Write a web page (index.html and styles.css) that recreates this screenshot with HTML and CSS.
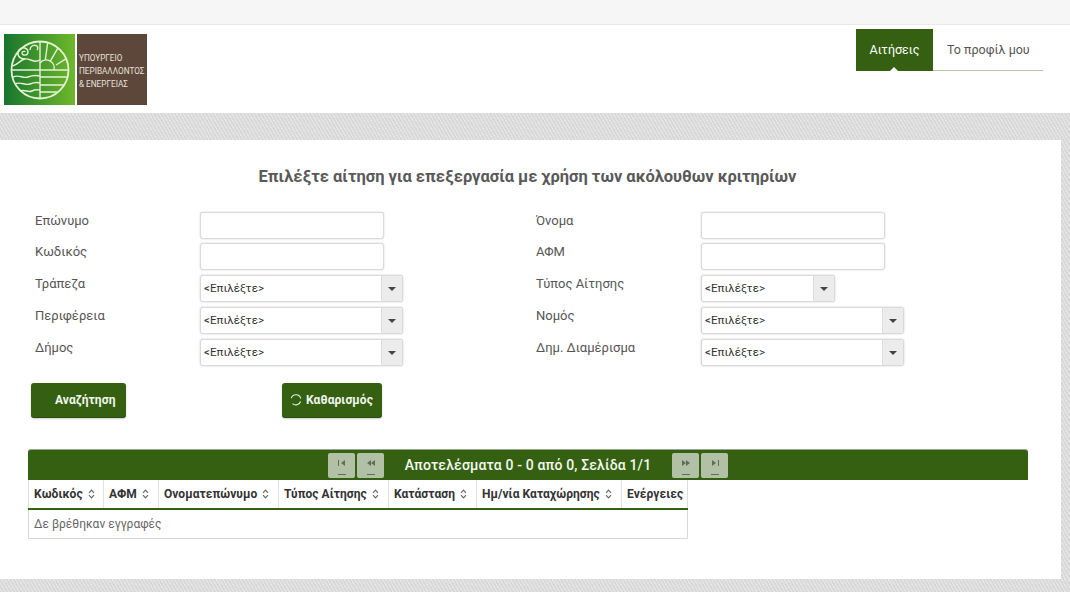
FILE: index.html
```html
<!DOCTYPE html>
<html lang="el">
<head>
<meta charset="utf-8">
<title>Αιτήσεις</title>
<link rel="stylesheet" href="styles.css">
</head>
<body>
<div class="topbar"></div>
<header class="header">
  <div class="logo">
    <div class="logo-mark">
      <svg width="60" height="60" viewBox="0 0 60 60" fill="none" stroke="#e4f3d2" stroke-width="1.4">
        <circle cx="30" cy="30" r="28.5" stroke-width="1.8"/>
        <path d="M30 1.5V58.5"/>
        <path d="M1.5 30H58.5M30 37H57M30 45H54M30 52H47"/>
        <path d="M3 37c6-3 10 2 15 0s8-2 12-1M5 44c6-3 10 2 15 0s7-2 10-1M10 51c5-2 8 2 12 0s5-1 8-1"/>
        <path d="M30 23a8 8 0 0 1 14 7M35.3 20L37.7 2.5M40 21.7L47.7 8.3M46 25L56.7 18.3"/>
        <path d="M2.5 26c5-1 8-6 12-7 6-1 10 5 15 1"/>
        <path d="M15 19c-6 0-9-5-6-9 3-4 9-2 9 2 0 4-6 4-6 1 0-2 3-2 3-1"/>
        <path d="M20 10c0-4 4-6 7-4 1 1 1 3 0 4"/>
      </svg>
    </div>
    <div class="logo-text">ΥΠΟΥΡΓΕΙΟ<br>ΠΕΡΙΒΑΛΛΟΝΤΟΣ<br>&amp; ΕΝΕΡΓΕΙΑΣ</div>
  </div>
  <nav class="tabs">
    <a class="tab tab-active">Αιτήσεις</a>
    <a class="tab tab-plain">Το προφίλ μου</a>
  </nav>
</header>
<div class="band-wrap">
  <main class="panel">
    <h1 class="title">Επιλέξτε αίτηση για επεξεργασία με χρήση των ακόλουθων κριτηρίων</h1>
    <form class="form">
      <label class="lbl">Επώνυμο</label>
      <div class="field"><input class="txt" type="text"></div>
      <label class="lbl">Όνομα</label>
      <div class="field"><input class="txt" type="text"></div>

      <label class="lbl">Κωδικός</label>
      <div class="field"><input class="txt" type="text"></div>
      <label class="lbl">ΑΦΜ</label>
      <div class="field"><input class="txt" type="text"></div>

      <label class="lbl">Τράπεζα</label>
      <div class="field"><div class="sel"><span class="sel-val">&lt;Επιλέξτε&gt;</span><span class="sel-btn"><i class="caret"></i></span></div></div>
      <label class="lbl">Τύπος Αίτησης</label>
      <div class="field"><div class="sel sel-short"><span class="sel-val">&lt;Επιλέξτε&gt;</span><span class="sel-btn"><i class="caret"></i></span></div></div>

      <label class="lbl">Περιφέρεια</label>
      <div class="field"><div class="sel"><span class="sel-val">&lt;Επιλέξτε&gt;</span><span class="sel-btn"><i class="caret"></i></span></div></div>
      <label class="lbl">Νομός</label>
      <div class="field"><div class="sel"><span class="sel-val">&lt;Επιλέξτε&gt;</span><span class="sel-btn"><i class="caret"></i></span></div></div>

      <label class="lbl">Δήμος</label>
      <div class="field"><div class="sel"><span class="sel-val">&lt;Επιλέξτε&gt;</span><span class="sel-btn"><i class="caret"></i></span></div></div>
      <label class="lbl">Δημ. Διαμέρισμα</label>
      <div class="field"><div class="sel"><span class="sel-val">&lt;Επιλέξτε&gt;</span><span class="sel-btn"><i class="caret"></i></span></div></div>
    </form>
    <div class="actions">
      <button class="btn btn-search" type="button">Αναζήτηση</button>
      <button class="btn btn-clear" type="button">
        <svg width="12" height="12" viewBox="0 0 12 12" fill="none" stroke="#e8efe0" stroke-width="1.1"><path d="M1.2 4.2A5 5 0 0 1 10.8 4.5M10.6 7.5A5 5 0 0 1 2.5 9.6"/></svg>
        Καθαρισμός
      </button>
    </div>
    <section class="results">
      <div class="pager">
        <span class="pg-group">
          <span class="pg-btn"><svg width="10" height="6" viewBox="0 0 10 6" fill="#5f6f55"><path d="M1 0h1v6H1zM8 0v6L4 3z"/></svg><i class="pg-line"></i></span>
          <span class="pg-btn"><svg width="10" height="6" viewBox="0 0 10 6" fill="#5f6f55"><path d="M5 0v6L1 3zM9 0v6L5 3z"/></svg><i class="pg-line"></i></span>
        </span>
        <span class="pg-text">Αποτελέσματα 0 - 0 από 0, Σελίδα 1/1</span>
        <span class="pg-group">
          <span class="pg-btn"><svg width="10" height="6" viewBox="0 0 10 6" fill="#5f6f55"><path d="M1 0v6l4-3zM5 0v6l4-3z"/></svg><i class="pg-line"></i></span>
          <span class="pg-btn"><svg width="10" height="6" viewBox="0 0 10 6" fill="#5f6f55"><path d="M2 0v6l4-3zM8 0h1v6H8z"/></svg><i class="pg-line"></i></span>
        </span>
      </div>
      <table class="grid">
        <colgroup>
          <col class="c1"><col class="c2"><col class="c3"><col class="c4"><col class="c5"><col class="c6"><col class="c7">
        </colgroup>
        <thead>
          <tr>
            <th>Κωδικός <svg class="sort" width="7" height="10" viewBox="0 0 7 10" fill="none" stroke="#666" stroke-width="1.2"><path d="M1 3.8L3.5 1.2 6 3.8M1 6.2L3.5 8.8 6 6.2"/></svg></th>
            <th>ΑΦΜ <svg class="sort" width="7" height="10" viewBox="0 0 7 10" fill="none" stroke="#666" stroke-width="1.2"><path d="M1 3.8L3.5 1.2 6 3.8M1 6.2L3.5 8.8 6 6.2"/></svg></th>
            <th>Ονοματεπώνυμο <svg class="sort" width="7" height="10" viewBox="0 0 7 10" fill="none" stroke="#666" stroke-width="1.2"><path d="M1 3.8L3.5 1.2 6 3.8M1 6.2L3.5 8.8 6 6.2"/></svg></th>
            <th>Τύπος Αίτησης <svg class="sort" width="7" height="10" viewBox="0 0 7 10" fill="none" stroke="#666" stroke-width="1.2"><path d="M1 3.8L3.5 1.2 6 3.8M1 6.2L3.5 8.8 6 6.2"/></svg></th>
            <th>Κατάσταση <svg class="sort" width="7" height="10" viewBox="0 0 7 10" fill="none" stroke="#666" stroke-width="1.2"><path d="M1 3.8L3.5 1.2 6 3.8M1 6.2L3.5 8.8 6 6.2"/></svg></th>
            <th>Ημ/νία Καταχώρησης <svg class="sort" width="7" height="10" viewBox="0 0 7 10" fill="none" stroke="#666" stroke-width="1.2"><path d="M1 3.8L3.5 1.2 6 3.8M1 6.2L3.5 8.8 6 6.2"/></svg></th>
            <th>Ενέργειες</th>
          </tr>
        </thead>
        <tbody>
          <tr><td colspan="7">Δε βρέθηκαν εγγραφές</td></tr>
        </tbody>
      </table>
    </section>
  </main>
  <div class="band-right"></div>
</div>
<div class="band-bottom"></div>
</body>
</html>
```

FILE: styles.css
```css
* { box-sizing: border-box; }
html, body { margin: 0; padding: 0; }
body {
  width: 1070px;
  height: 592px;
  overflow: hidden;
  background: #fff;
  font-family: Roboto, "Liberation Sans", sans-serif;
  color: #555;
}
.topbar {
  height: 25px;
  background: #f6f6f6;
  border-bottom: 1px solid #e9e9e9;
  box-shadow: 0 1px 3px rgba(0,0,0,.08);
}
.header {
  height: 88px;
  background: #fff;
  padding: 9px 27px 0 4px;
  display: flex;
  justify-content: space-between;
  align-items: flex-start;
}
.logo {
  display: flex;
  width: 143px;
  height: 71px;
}
.logo-mark {
  width: 71px;
  height: 71px;
  background: linear-gradient(90deg, #17752e, #6fb82b);
  display: flex;
  align-items: center;
  justify-content: center;
}
.logo-text {
  margin-left: 2px;
  width: 70px;
  background: #5c473a;
  color: #e8e0da;
  font-size: 8.2px;
  line-height: 13px;
  padding: 18px 0 0 2px;
  white-space: nowrap;
  overflow: hidden;
}
.tabs {
  display: flex;
  width: 187px;
  margin-top: -5px;
  height: 42px;
  border-bottom: 1px solid #b8c5a8;
}
.tab {
  font-size: 12.5px;
  line-height: 41px;
  height: 42px;
}
.tab-active {
  position: relative;
  width: 77px;
  text-align: center;
  background: #356012;
  color: #fff;
}
.tab-active::after {
  content: "";
  position: absolute;
  left: 34px;
  bottom: 0;
  border: 4px solid transparent;
  border-top: 0;
  border-bottom-color: #fff;
}
.tab-plain {
  padding-left: 14px;
  color: #555;
}
.band-wrap {
  height: 466px;
  display: flex;
  padding-top: 27px;
  background: repeating-linear-gradient(60deg, #d6d6d6 0 1px, #e6e6e6 1px 2px, #dcdcdc 2px 3px);
}
.panel {
  width: 1061px;
  height: 439px;
  background: #fff;
  padding-top: 26px;
}
.band-right { flex: 1; }
.band-bottom {
  height: 13px;
  background: repeating-linear-gradient(60deg, #d6d6d6 0 1px, #e6e6e6 1px 2px, #dcdcdc 2px 3px);
}
.title {
  margin: 0 0 24px;
  font-size: 16.5px;
  line-height: 22px;
  font-weight: 700;
  color: #595959;
  text-align: center;
  width: 1055px;
}
.form {
  display: grid;
  grid-template-columns: 165px 336px 165px 1fr;
  grid-template-rows: 31px;
  grid-auto-rows: 32px;
  padding-left: 35px;
}
.lbl {
  font-size: 13px;
  line-height: 18px;
  color: #555;
}
.txt {
  display: block;
  width: 184px;
  height: 27px;
  border: 1px solid #d9d9d9;
  border-radius: 3px;
  background: #fff;
  box-shadow: 0 0 2px rgba(0,0,0,.18);
  outline: 0;
}
.sel {
  display: flex;
  width: 203px;
  height: 27px;
  border: 1px solid #d9d9d9;
  border-radius: 3px;
  background: #fff;
  box-shadow: 0 0 2px rgba(0,0,0,.22);
  font-size: 11.6px;
  color: #333;
}
.sel-short { width: 134px; }
.sel-val {
  flex: 1;
  padding-left: 3px;
  line-height: 25px;
}
.sel-btn {
  width: 21px;
  background: #ececec;
  border-left: 1px solid #ddd;
  border-radius: 0 3px 3px 0;
  display: flex;
  align-items: center;
  justify-content: center;
}
.caret {
  border: 4px solid transparent;
  border-bottom: 0;
  border-top: 4px solid #444;
}
.actions {
  display: flex;
  margin-top: 12px;
  padding-left: 31px;
}
.btn {
  height: 35px;
  border: 0;
  border-bottom: 1px solid #2a4c0e;
  border-radius: 3px;
  background: #356012;
  color: #f2f6ee;
  font-family: inherit;
  font-size: 12px;
  font-weight: 700;
  letter-spacing: .1px;
  padding: 0;
  box-shadow: 0 1px 2px rgba(0,0,0,.2);
  display: flex;
  align-items: center;
}
.btn-search {
  width: 95px;
  padding-left: 24px;
}
.btn-clear {
  width: 100px;
  margin-left: 156px;
  padding-left: 8px;
  gap: 4px;
}
.results {
  margin: 31px 0 0 28px;
}
.pager {
  width: 1000px;
  height: 31px;
  background: #356012;
  border-top: 1px solid #9aa68f;
  border-radius: 3px 3px 0 0;
  display: flex;
  align-items: center;
  justify-content: center;
}
.pg-group {
  display: flex;
  gap: 2px;
}
.pg-text {
  width: 288px;
  text-align: center;
  color: #f4f7f0;
  font-size: 14px;
  font-weight: 500;
  letter-spacing: .15px;
}
.pg-btn {
  width: 27px;
  height: 25px;
  background: #b2c1a5;
  border-radius: 2px;
  display: flex;
  flex-direction: column;
  align-items: center;
  padding-top: 7px;
}
.pg-line {
  display: block;
  width: 8px;
  height: 1px;
  margin-top: 8px;
  background: #5f6f55;
}
.grid {
  width: 659px;
  table-layout: fixed;
  border-collapse: collapse;
  background: #fff;
}
.c1 { width: 75px; }
.c2 { width: 55px; }
.c3 { width: 120px; }
.c4 { width: 110px; }
.c5 { width: 88px; }
.c6 { width: 145px; }
.c7 { width: 66px; }
.grid th {
  height: 29px;
  padding: 0 0 0 5px;
  font-size: 12px;
  font-weight: 700;
  color: #333;
  text-align: left;
  white-space: nowrap;
  letter-spacing: .05px;
  border-left: 1px solid #e2e2e2;
  border-bottom: 2px solid #356012;
}
.grid th:first-child { border-left: 1px solid #ddd; }
.grid th:last-child { border-right: 1px solid #ddd; }
.sort {
  margin-left: 2px;
  vertical-align: -1px;
}
.grid td {
  height: 29px;
  padding: 0 0 0 5px;
  font-size: 12px;
  color: #666;
  border: 1px solid #d8d8d8;
  border-top: 0;
}
```
